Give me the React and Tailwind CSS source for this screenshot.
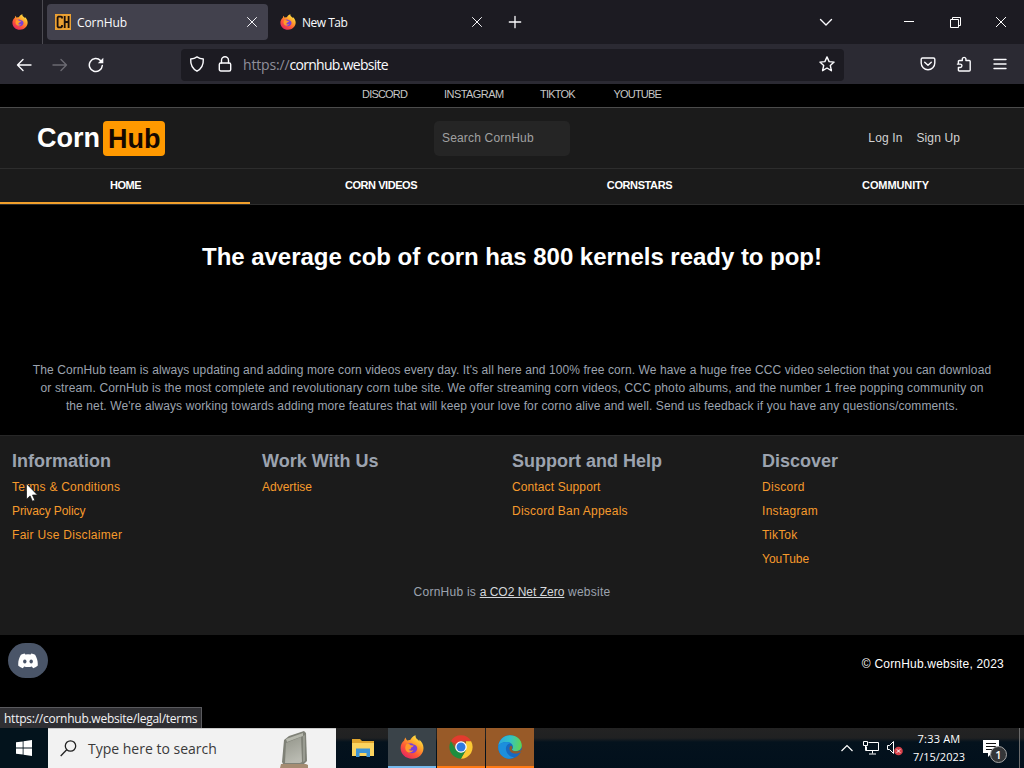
import { useId } from "react";

const SOCIALS = [
  { label: "DISCORD", className: "w-[82px]" },
  { label: "INSTAGRAM", className: "w-[96px] tracking-[-0.55px]" },
  { label: "TIKTOK", className: "w-[73.5px]" },
  { label: "YOUTUBE", className: "w-[49px]" },
];

const NAV = [
  { label: "HOME", className: "border-b-2 border-[#f2a02c] pl-px tracking-[-0.5px]" },
  { label: "CORN VIDEOS", className: "tracking-[-0.45px]" },
  { label: "CORNSTARS", className: "tracking-[-0.4px]" },
  { label: "COMMUNITY", className: "tracking-[-0.1px]" },
];

const FOOTER = [
  {
    title: "Information",
    links: [
      { label: "Terms & Conditions", className: "tracking-[0.23px]" },
      { label: "Privacy Policy", className: "tracking-[-0.1px]" },
      { label: "Fair Use Disclaimer", className: "tracking-[0.3px]" },
    ],
  },
  { title: "Work With Us", links: [{ label: "Advertise", className: "" }] },
  {
    title: "Support and Help",
    links: [
      { label: "Contact Support", className: "tracking-[0.12px]" },
      { label: "Discord Ban Appeals", className: "tracking-[0.23px]" },
    ],
  },
  {
    title: "Discover",
    links: [
      { label: "Discord", className: "tracking-[0.3px]" },
      { label: "Instagram", className: "tracking-[0.3px]" },
      { label: "TikTok", className: "tracking-[0.2px]" },
      { label: "YouTube", className: "" },
    ],
  },
];

const ABOUT = [
  {
    text: "The CornHub team is always updating and adding more corn videos every day. It's all here and 100% free corn. We have a huge free CCC video selection that you can download",
    className: "tracking-[0.098px]",
  },
  {
    text: "or stream. CornHub is the most complete and revolutionary corn tube site. We offer streaming corn videos, CCC photo albums, and the number 1 free popping community on",
    className: "tracking-[0.147px]",
  },
  {
    text: "the net. We're always working towards adding more features that will keep your love for corno alive and well. Send us feedback if you have any questions/comments.",
    className: "tracking-[0.105px]",
  },
];

function Line({ size = 16, className = "", children, width = 1.4 }) {
  return (
    <svg
      width={size}
      height={size}
      viewBox="0 0 16 16"
      fill="none"
      stroke="currentColor"
      strokeWidth={width}
      strokeLinecap="round"
      strokeLinejoin="round"
      className={`shrink-0 ${className}`}
    >
      {children}
    </svg>
  );
}

function Firefox({ size = 16 }) {
  const id = useId();
  return (
    <svg width={size} height={size} viewBox="0 0 24 24" className="shrink-0">
      <defs>
        <linearGradient id={id} x1="0.85" y1="0.05" x2="0.2" y2="0.95">
          <stop offset="0" stopColor="#fff04a" />
          <stop offset="0.35" stopColor="#ffa52b" />
          <stop offset="0.65" stopColor="#ff5a35" />
          <stop offset="1" stopColor="#e5265f" />
        </linearGradient>
      </defs>
      <path
        fill={`url(#${id})`}
        d="M4.2 5.6C4.4 4.3 5 3.2 5.6 2.6c.1 1.2.7 2.1 1.6 2.9.9-.5 2-.7 3-.6C11 3.400 13 .8 15.600 .2c-.3 1.600.4 2.900 1.700 4 .9.8 1.600 1.400 2.100 2.200.1-.7 0-1.400-.3-2 2.600 1.900 4.400 5 4.400 8.500C23.500 19 18.500 23.700 12 23.700S.6 19 .6 13c0-3 1.300-5.600 3.600-7.400z"
      />
      <path fill="#7b3fd6" d="M7.600 9.200c1.700-1.300 4.500-1.300 6 .2 3 .4 4.100 3 3.500 5.100-.7 2.500-3 3.900-5.400 3.700-3-.2-5.200-2.400-5.200-5.200 0-1.400.3-2.800 1.100-3.800z" />
      <path fill="#ff9a2a" d="M6.200 9.400c1.700-.9 3.600-.4 4.500.9l2.900.3c-.2 1.300-1.900 1.700-2.700 2.300.2 1.300-1 2-2.300 1.600 1 1.500 3.400 1.400 4.800.5-.7 2.300-3.700 3.300-6 1.900-2.400-1.500-2.700-5.100-1.200-7.500z" />
    </svg>
  );
}

function Chrome() {
  return (
    <svg width="24" height="24" viewBox="0 0 24 24">
      <path fill="#e33b2e" d="M12 12 1.900 6.200A11.600 11.600 0 0 1 22.100 6.200H12z" />
      <path fill="#fcc934" d="M22.100 6.200A11.700 11.700 0 0 1 11.900 23.700L17 14.900V6.200z" />
      <path fill="#1e8e3e" d="M1.900 6.200 7 14.900l5 2.900 5-2.900-5.100 8.800A11.700 11.700 0 0 1 1.900 6.200z" />
      <circle cx="12" cy="12" r="5.800" fill="#fff" />
      <circle cx="12" cy="12" r="4.500" fill="#3079e0" />
    </svg>
  );
}

function Edge() {
  return (
    <svg width="24" height="24" viewBox="0 0 24 24">
      <defs>
        <linearGradient id="edge-top" x1="0" y1="0.4" x2="1" y2="0.5">
          <stop offset="0" stopColor="#2aa7e2" />
          <stop offset="0.5" stopColor="#34c4c3" />
          <stop offset="1" stopColor="#62d54e" />
        </linearGradient>
      </defs>
      <circle cx="12" cy="12" r="11.800" fill="#1769c0" />
      <path fill="url(#edge-top)" d="M.3 11C1 4.600 6 .2 12.200.2c6.500 0 11.600 4.800 11.600 10.300 0 3.500-2.900 5.700-6 5.700-2.500 0-4-.9-3.800-1.700.2-.6 1-1 1-2.600 0-2.700-2.900-5-6.400-5C5 6.900 1.500 8.500.3 11z" />
      <path fill="#1c8fdc" d="M.3 11C1.600 8.300 5 6.900 8.600 6.900c1.700 0 3.200.5 4.300 1.300-3.100.1-5 2.600-5 5.400 0 5 4 8.600 8.200 8.700-4 2.400-9 1.700-12.200-1.500C1.100 18 0 14.800.3 11z" />
      <path fill="#8f5b2d" d="M13.200 10.700c-1.100.3-1.800 1.300-1.800 2.700 0 3.300 3.500 5.700 7.600 5 1.500-.3 3-.9 5-2.200v-1.400c-2 1.100-4 1.500-6.200 1.400-2.500-.1-4.200-1-4-1.900.5-.8 1.300-2.500-.6-3.600z" />
    </svg>
  );
}

function Folder() {
  return (
    <svg width="22" height="18" viewBox="0 0 22 18">
      <path fill="#e0a52e" d="M0 0h8l2 2h12v4H0z" />
      <path fill="#fbd45f" d="M0 4h22v13H0z" />
      <path fill="#3d94d6" d="M4 9.500h14V18h-3.500v-4h-7v4H4z" />
    </svg>
  );
}

// weathered stone slab standing in the search box
function SearchArt() {
  return (
    <svg width="32" height="38" viewBox="0 0 32 38">
      <defs>
        <linearGradient id="slab" x1="0" y1="0" x2="0.3" y2="1">
          <stop offset="0" stopColor="#94968b" />
          <stop offset="1" stopColor="#b9bab1" />
        </linearGradient>
      </defs>
      <path fill="#7f8177" d="M5 10 10 6 25 1l2 2 1 28-3 3H4L3 32z" />
      <path fill="#b5b7ac" d="m7 9 17-6v3L8 12z" />
      <path fill="url(#slab)" d="m7 13 15-6 1 25-2 1H6z" />
      <path fill="#999b91" d="m24 6 2-1v26l-2 1z" />
      <path fill="#a58c72" d="M2 34h25l2 1v3H1z" />
    </svg>
  );
}

function TabStrip() {
  return (
    <div className="flex h-11 items-center bg-[#1c1b22] text-[12px] text-[#fbfbfe]">
      <div className="flex h-11 w-[43px] items-center border-r border-[#4c4b52] pl-3">
        <Firefox />
      </div>
      <div className="ml-1 flex h-9 w-[221px] items-center rounded bg-[#42414d] pl-2 pr-[10px]">
        <svg width="16" height="16" viewBox="0 0 16 16" className="shrink-0">
          <rect width="16" height="16" fill="#eaa033" />
          <path fill="none" stroke="#1a0f0a" strokeWidth="1.800" d="M7 4.500V3L6 2.600H3.300L2.600 3.500v9l.7.900H6L7 12.500V11M9.700 2v12M13.600 2v12M9.700 8h4" />
        </svg>
        <span className="ml-[6px] mt-px flex-1 tracking-[-0.1px]">CornHub</span>
        <Line size={12} width={1.3}><path d="m2 2 12 12M14 2 2 14" /></Line>
      </div>
      <div className="ml-3 flex w-[203px] items-center">
        <Firefox />
        <span className="ml-[6px] mt-px flex-1 tracking-[-0.5px]">New Tab</span>
        <Line size={12} width={1.3}><path d="m2 2 12 12M14 2 2 14" /></Line>
      </div>
      <Line size={14} className="ml-[25px]" width={1.5}><path d="M8 1.500v13M1.500 8h13" /></Line>
      <div className="flex-1" />
      <Line size={16} className="mr-[70px]"><path d="m2.500 5.500 5.500 5.500 5.500-5.500" /></Line>
      <svg width="10" height="10" className="mr-9" stroke="white" fill="none"><path d="M0 4.500h10" /></svg>
      <svg width="11" height="11" className="mr-[35px]" stroke="white" fill="none">
        <path d="M.5 2.500h8v8h-8zM2.500 2.500v-2h8v8h-2" />
      </svg>
      <svg width="10" height="10" className="mr-[18px]" stroke="white" fill="none"><path d="m0 0 10 10M10 0 0 10" /></svg>
    </div>
  );
}

function Toolbar() {
  return (
    <div className="flex h-10 items-center bg-[#2b2a33] pl-4 pr-4 text-[#fbfbfe]">
      <Line className="mt-px"><path d="M15 8H1.500M7 2.500 1.500 8 7 13.500" /></Line>
      <Line className="ml-5 mt-px text-[#6b6a72]"><path d="M1 8h13.500M9 2.500 14.500 8 9 13.500" /></Line>
      <Line className="ml-5 mt-[2px]" width={1.5}>
        <path d="M14.300 8.500A6.500 6.500 0 1 1 12.500 3.500l1 1" />
        <path fill="currentColor" stroke="none" d="M15.300.8v5.500H9.800z" />
      </Line>
      <div className="ml-[77px] mt-[2px] flex h-8 w-[663px] items-center rounded bg-[#1c1b22] pl-2 pr-[9px]">
        <Line className="mb-[2px]"><path d="M8 .9c2 1.500 4.300 2 6.300 2.100.3 5.500-1.700 9.700-6.300 12.200C3.400 12.700 1.400 8.500 1.700 3 3.700 2.900 6 2.400 8 .9z" /></Line>
        <Line className="mb-[2px] ml-3">
          <rect x="2.300" y="7" width="11.400" height="8" rx="1.500" />
          <path d="M4.500 7V4.300a3.500 3.500 0 0 1 7 0V7" />
        </Line>
        <span className="ml-[10px] flex-1 text-[14px] leading-5">
          <span className="tracking-[-0.15px] text-[#8f8f9a]">https://</span>
          <span className="tracking-[-0.72px]">cornhub.website</span>
        </span>
        <Line className="mb-[2px]"><path d="m8 .9 2.100 4.700 5 .5-3.800 3.400 1.100 5.200L8 12l-4.400 2.700 1.100-5.200L.9 6.100l5-.5z" /></Line>
      </div>
      <div className="flex-1" />
      <Line><path d="M2.500 2h11c.8 0 1.300.5 1.300 1.300V7a6.800 6.800 0 0 1-13.600 0V3.300C1.200 2.500 1.700 2 2.500 2z" /><path d="M4.700 6.200 8 9.300l3.300-3.100" /></Line>
      <Line className="ml-5">
        <path d="M6.300 4.500V2.700a1.900 1.900 0 0 1 3.600 0v1.800h3.300c.6 0 1 .4 1 1V14c0 .6-.4 1-1 1H3.400c-.6 0-1-.4-1-1v-2.500h1.800a1.700 1.700 0 0 0 0-3.400H1.400M2.400 7V5.500c0-.6.400-1 1-1h2.900" />
      </Line>
      <Line className="ml-5" width={1.4}><path d="M2 3.500h12M2 8h12M2 12.500h12" /></Line>
    </div>
  );
}

function Site() {
  return (
    <div className="flex flex-1 flex-col bg-black font-['Liberation_Sans',Arial,sans-serif]">
      <div className="flex h-6 border-b border-[#4b4b4b] pl-[362px] text-[11px] leading-[21px] tracking-[-0.8px] text-[#c6c6c6]">
        {SOCIALS.map((s) => (
          <span key={s.label} className={s.className}>{s.label}</span>
        ))}
      </div>

      <header className="flex h-[61px] items-center border-b border-[#2d2d2d] bg-[#1b1b1b] pl-[37px]">
        <div className="flex w-[397px] items-center text-[27px] font-bold leading-9 text-white">
          <span>Corn</span>
          <span className="ml-[3px] h-[35px] rounded bg-[#ff9900] px-[5px] leading-[36px] text-[#150800]">Hub</span>
        </div>
        <div className="h-[35px] w-[136px] rounded-[5px] bg-[#252525] pl-2 text-[12px] leading-[34px] tracking-[0.17px] text-[#a1a1a1]">
          Search CornHub
        </div>
        <div className="flex flex-1 justify-end gap-[14px] pr-16 text-[12px] tracking-[0.12px] text-[#d2d2d2]">
          <span>Log In</span>
          <span>Sign Up</span>
        </div>
      </header>

      <nav className="grid h-9 grid-cols-[250px_262px_255px_257px] border-b border-[#2d2d2d] bg-[#1b1b1b] text-center text-[11px] font-bold leading-8 text-white">
        {NAV.map((item) => (
          <span key={item.label} className={item.className}>{item.label}</span>
        ))}
      </nav>

      <h1 className="mt-[34px] text-center text-[24px] font-bold leading-9 tracking-[-0.03px] text-white">
        The average cob of corn has 800 kernels ready to pop!
      </h1>

      <div className="mt-[86px] flex flex-col items-center whitespace-nowrap text-[12px] leading-[18px] text-[#9ca3af]">
        {ABOUT.map((line) => (
          <p key={line.text} className={line.className}>{line.text}</p>
        ))}
      </div>

      <footer className="mt-5 flex h-[200px] flex-col border-t border-[#272727] bg-[#1b1b1b]">
        <div className="grid h-[144px] grid-cols-4 pl-3 pr-3 pt-[11px]">
          {FOOTER.map((col) => (
            <div key={col.title} className="flex flex-col">
              <h2 className="text-[18px] font-bold leading-7 text-[#9ca3af]">{col.title}</h2>
              {col.links.map((link) => (
                <a key={link.label} className={`text-[12px] leading-6 text-[#f69a2c] ${link.className}`}>{link.label}</a>
              ))}
            </div>
          ))}
        </div>
        <p className="text-center text-[12px] leading-6 text-[#9ca3af]">
          <span className="tracking-[0.25px]">CornHub is </span>
          <span className="text-[#d5d8dc] underline">a CO2 Net Zero</span>
          <span className="tracking-[0.25px]"> website</span>
        </p>
      </footer>

      <p className="mt-5 pr-5 text-right text-[12px] leading-[18px] tracking-[0.2px] text-white">© CornHub.website, 2023</p>
    </div>
  );
}

function Taskbar() {
  return (
    <div className="flex h-10 bg-[linear-gradient(#232323_0,#202122_10px,#04121d_14px,#02101c_100%)]">
      <div className="flex w-12 items-center justify-center bg-[#03131c]">
        <svg width="16" height="16" viewBox="0 0 16 16" fill="white">
          <path d="M0 2.300 6.700 1.400v6.100H0zM7.500 1.300 16 0v7.500H7.500zM0 8.400h6.700v6.200L0 13.700zM7.500 8.400H16V16l-8.500-1.200z" />
        </svg>
      </div>
      <div className="flex w-[288px] items-center border-t border-[#c9c9c9] bg-[#f2f2f2] pl-3 text-[14px] text-[#3a3a3a]">
        <svg width="17" height="17" viewBox="0 0 17 17" fill="none" stroke="#222" strokeWidth="1.300">
          <circle cx="10.500" cy="6" r="5.200" />
          <path d="M6.700 9.800.7 16" />
        </svg>
        <span className="ml-[11px] flex-1">Type here to search</span>
        <div className="mr-[25px] self-end"><SearchArt /></div>
      </div>
      <div className="flex w-[52px] items-center justify-center pl-[2px]"><Folder /></div>
      <div className="flex w-12 items-center justify-center border-b-2 border-[#76b9ed] bg-[#3a4349]"><Firefox size={24} /></div>
      <div className="ml-px flex w-12 items-center justify-center border-b-2 border-[#ff7a14] bg-[#985a28]"><Chrome /></div>
      <div className="ml-px flex w-12 items-center justify-center border-b-2 border-[#ff7a14] bg-[#985a28]"><Edge /></div>
      <div className="flex-1" />
      <svg width="12" height="8" viewBox="0 0 12 8" fill="none" stroke="white" strokeWidth="1.200" className="mr-[10px] mt-4">
        <path d="m.5 7 5.500-5.500L11.500 7" />
      </svg>
      <svg width="16" height="14" viewBox="0 0 16 14" fill="none" stroke="white" className="mr-2 mt-[13px]">
        <path d="M5.500 1.500h10v8h-12v-4M9.500 9.500v3M6 13h7M.5.500h4v4h-4zM2.500 4.500v5h2" />
      </svg>
      <svg width="18" height="16" viewBox="0 0 18 16" fill="none" stroke="white" className="mr-[7px] mt-3">
        <path d="M.5 5.500h2l4-4v12l-4-4h-2z" />
        <circle cx="11.500" cy="11" r="4.300" fill="#d8424b" stroke="none" />
        <path d="m9.800 9.300 3.400 3.400M13.200 9.300l-3.400 3.400" />
      </svg>
      <div className="flex w-[54px] flex-col items-center whitespace-nowrap pt-[2px] text-[11px] leading-[18px] text-white">
        <span className="tracking-[0.2px]">7:33 AM</span>
        <span>7/15/2023</span>
      </div>
      <div className="relative ml-[17px] mr-[20px] mt-3 h-7 w-[16px]">
        <svg width="17" height="17" viewBox="0 0 17 17">
          <path fill="white" d="M0 0h16v13H9l-4 4v-4H0z" />
          <path stroke="#111" d="M3 3.500h10M3 6.500h10M3 9.500h7" />
        </svg>
        <span className="absolute left-[7px] top-[6px] h-[17px] w-[17px] rounded-full border border-[#a5a5a5] bg-[#343638] text-center text-[11px] font-semibold leading-[15px] text-white">1</span>
      </div>
      <div className="w-[5px] border-l border-[#6b6b6b]" />
    </div>
  );
}

export default function App() {
  return (
    <div className="relative flex h-[768px] w-[1024px] flex-col overflow-hidden bg-black font-['Open_Sans','Noto_Sans',sans-serif]">
      <TabStrip />
      <Toolbar />
      <Site />
      <Taskbar />

      <div className="absolute left-2 top-[643px] flex h-[35px] w-10 items-center justify-center rounded-full bg-[#4a5568]">
        <svg width="20" height="16" viewBox="0 0 20 16">
          <path fill="white" d="M6.700.5 7.300 1.500a15 15 0 0 1 5.400 0l.6-1c1.300.2 2.600.6 3.800 1.200 2 3.200 3 7 2.600 11-1.400 1.200-3 2-4.600 2.500l-1.200-1.700c-2.400.8-5.400.8-7.800 0l-1.200 1.700C3.300 14.700 1.700 13.900.3 12.700c-.4-4 .6-7.800 2.600-11C4.100 1.100 5.400.7 6.700.5z" />
          <ellipse cx="6.800" cy="8.500" rx="1.700" ry="1.900" fill="#4a5568" />
          <ellipse cx="13.200" cy="8.500" rx="1.700" ry="1.900" fill="#4a5568" />
        </svg>
      </div>

      <div className="absolute bottom-10 left-0 h-[21px] w-[202px] whitespace-nowrap border-r border-t border-[#5a5a5e] bg-[#2f2f33] pl-1 text-[12px] leading-[22px] tracking-[-0.25px] text-[#f4f4f6]">
        https://cornhub.website/legal/terms
      </div>

      <svg width="12" height="19" viewBox="0 0 12 19" className="absolute left-[26px] top-[483px]">
        <path fill="white" stroke="#111" strokeWidth="0.700" d="M.5.700v15.600l3.600-3.400 2.300 5.300 2.400-1-2.300-5.200h5z" />
      </svg>
    </div>
  );
}
